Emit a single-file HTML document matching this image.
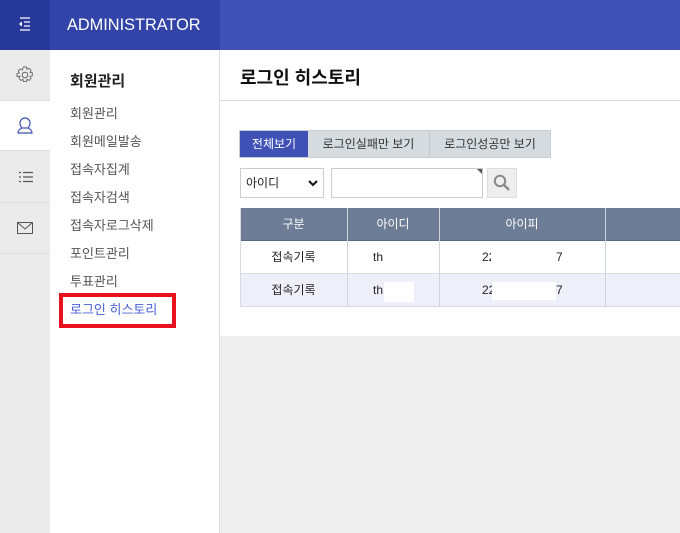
<!DOCTYPE html><html><head><meta charset="utf-8"><style>
*{margin:0;padding:0;box-sizing:border-box}
body{width:680px;height:533px;overflow:hidden;background:#efefef;font-family:"Liberation Sans","Noto Sans CJK KR",sans-serif;position:relative}
.a{position:absolute}
</style></head><body>
<div class="a" style="left:0;top:0;width:50px;height:50px;background:#26399a"></div>
<div class="a" style="left:50px;top:0;width:170px;height:50px;background:#3344a8"></div>
<div class="a" style="left:220px;top:0;width:460px;height:50px;background:#3f51b5"></div>
<svg class="a" style="left:17px;top:17px" width="16" height="14" viewBox="0 0 16 14"><g stroke="#fff" stroke-width="1.3" fill="none"><path d="M3 1h10M7 5h6M7 9h6M3 13h10"/></g><path d="M2 7l3-2.5v5z" fill="#fff"/></svg>
<div class="a" style="left:67px;top:15px;color:#fff;font-size:17px;transform:scaleX(.96);transform-origin:left">ADMINISTRATOR</div>
<div class="a" style="left:0;top:50px;width:50px;height:483px;background:#ebebeb"></div>
<div class="a" style="left:0;top:100px;width:50px;height:51px;background:#fff;border-top:1px solid #ddd;border-bottom:1px solid #ddd"></div>
<div class="a" style="left:0;top:202px;width:50px;height:1px;background:#ddd"></div>
<div class="a" style="left:0;top:253px;width:50px;height:1px;background:#ddd"></div>
<svg class="a" style="left:16px;top:66px" width="18" height="18" viewBox="0 0 18 18"><circle cx="9" cy="9" r="2.8" stroke="#666" fill="none"/><path d="M7.5 1h3l.5 2.3 2-1.1 2.1 2.1-1.1 2 2.3.5v3l-2.3.5 1.1 2-2.1 2.1-2-1.1-.5 2.3h-3l-.5-2.3-2 1.1-2.1-2.1 1.1-2L1 10.5v-3l2.3-.5-1.1-2 2.1-2.1 2 1.1z" stroke="#666" stroke-width=".9" fill="none"/></svg>
<svg class="a" style="left:17px;top:117px" width="16" height="17" viewBox="0 0 16 17"><path d="M5 11C3 9 3 7 3 6a5 5 0 0 1 10 0c0 1 0 3-2 5M1 16c0-3 2-4 4-5h6c2 1 4 2 4 5z" stroke="#3f51b5" stroke-width="1.2" fill="none"/></svg>
<svg class="a" style="left:18px;top:171px" width="15" height="12" viewBox="0 0 15 12"><g stroke="#555" stroke-width="1.2"><path d="M5 1.5h10M5 6h10M5 10.5h10M1 1.5h2M1 6h2M1 10.5h2"/></g></svg>
<svg class="a" style="left:17px;top:222px" width="16" height="12" viewBox="0 0 16 12"><path d="M.5.5h15v11H.5zM.5.5L8 7l7.5-6.5" stroke="#555" fill="none"/></svg>
<div class="a" style="left:50px;top:50px;width:170px;height:483px;background:#fff;border-right:1px solid #ddd"></div>
<div class="a" style="left:70px;top:70px;font-size:15px;color:#222;font-weight:bold">회원관리</div>
<div class="a" style="left:70px;top:100px;font-size:13px;color:#555;line-height:28px">회원관리<br>회원메일발송<br>접속자집계<br>접속자검색<br>접속자로그삭제<br>포인트관리<br>투표관리<br><span style="color:#4a62d8">로그인 히스토리</span></div>
<div class="a" style="left:59px;top:293px;width:117px;height:35px;border:4px solid #e8121f"></div>
<div class="a" style="left:220px;top:50px;width:460px;height:286px;background:#fff"></div>
<div class="a" style="left:220px;top:100px;width:460px;height:1px;background:#ddd"></div>
<div class="a" style="left:240px;top:64px;font-size:18px;font-weight:bold;color:#111">로그인 히스토리</div>
<div class="a" style="left:239px;top:130px;width:312px;height:28px;background:#d5dbdf;border:1px solid #c8cdd2"></div>
<div class="a" style="left:240px;top:131px;width:68px;height:26px;background:#3f51b5;color:#fff;font-size:12px;text-align:center;line-height:26px">전체보기</div>
<div class="a" style="left:308px;top:131px;width:122px;height:26px;border-right:1px solid #c3c8cc;color:#333;font-size:12px;text-align:center;line-height:26px">로그인실패만 보기</div>
<div class="a" style="left:430px;top:131px;width:120px;height:26px;color:#333;font-size:12px;text-align:center;line-height:26px">로그인성공만 보기</div>
<div class="a" style="left:240px;top:168px;width:84px;height:30px;border:1px solid #ccc;font-size:12px;color:#222;line-height:28px;padding-left:5px">아이디<svg class="a" style="left:67px;top:11px" width="10" height="7" viewBox="0 0 10 7"><path d="M1 1l4 4 4-4" stroke="#111" stroke-width="2" fill="none"/></svg></div>
<div class="a" style="left:331px;top:168px;width:152px;height:30px;border:1px solid #ccc"></div>
<div class="a" style="left:477px;top:169px;width:0;height:0;border-left:5px solid transparent;border-top:5px solid #555"></div>
<div class="a" style="left:487px;top:168px;width:30px;height:30px;background:#eee;border:1px solid #ddd"></div>
<svg class="a" style="left:493px;top:174px" width="18" height="18" viewBox="0 0 18 18"><circle cx="7" cy="7" r="5.2" stroke="#888" stroke-width="2" fill="none"/><path d="M11 11l5 5" stroke="#888" stroke-width="2.4"/></svg>
<div class="a" style="left:240px;top:208px;width:440px;height:33px;background:#6d7d96;border-bottom:1px solid #5b6a83"></div>
<div class="a" style="left:240px;top:241px;width:440px;height:33px;background:#fff;border-bottom:1px solid #d8dbe3"></div>
<div class="a" style="left:240px;top:274px;width:440px;height:33px;background:#edf0f8;border-bottom:1px solid #d8dbe3"></div>
<div class="a" style="left:240px;top:208px;width:1px;height:99px;background:#d8dbe3"></div>
<div class="a" style="left:347px;top:208px;width:1px;height:99px;background:#d0d4dc"></div>
<div class="a" style="left:439px;top:208px;width:1px;height:99px;background:#d0d4dc"></div>
<div class="a" style="left:605px;top:208px;width:1px;height:99px;background:#d0d4dc"></div>
<div class="a" style="left:240px;top:208px;width:107px;line-height:33px;text-align:center;color:#fff;font-size:12px">구분</div>
<div class="a" style="left:347px;top:208px;width:92px;line-height:33px;text-align:center;color:#fff;font-size:12px">아이디</div>
<div class="a" style="left:439px;top:208px;width:166px;line-height:33px;text-align:center;color:#fff;font-size:12px">아이피</div>
<div class="a" style="left:240px;top:241px;width:107px;line-height:33px;text-align:center;color:#222;font-size:12px">접속기록</div>
<div class="a" style="left:240px;top:274px;width:107px;line-height:33px;text-align:center;color:#222;font-size:12px">접속기록</div>
<div class="a" style="left:373px;top:241px;line-height:33px;color:#222;font-size:12px">th</div>
<div class="a" style="left:373px;top:274px;line-height:33px;color:#222;font-size:12px">th</div>
<div class="a" style="left:384px;top:282px;width:30px;height:20px;background:#fff"></div>
<div class="a" style="left:482px;top:241px;line-height:33px;color:#222;font-size:12px">22</div>
<div class="a" style="left:556px;top:241px;line-height:33px;color:#222;font-size:12px">7</div>
<div class="a" style="left:491px;top:241px;width:62px;height:32px;background:#fff"></div>
<div class="a" style="left:482px;top:274px;line-height:33px;color:#222;font-size:12px">22</div>
<div class="a" style="left:556px;top:274px;line-height:33px;color:#222;font-size:12px">7</div>
<div class="a" style="left:492px;top:282px;width:64px;height:18px;background:#fff"></div>
</body></html>
